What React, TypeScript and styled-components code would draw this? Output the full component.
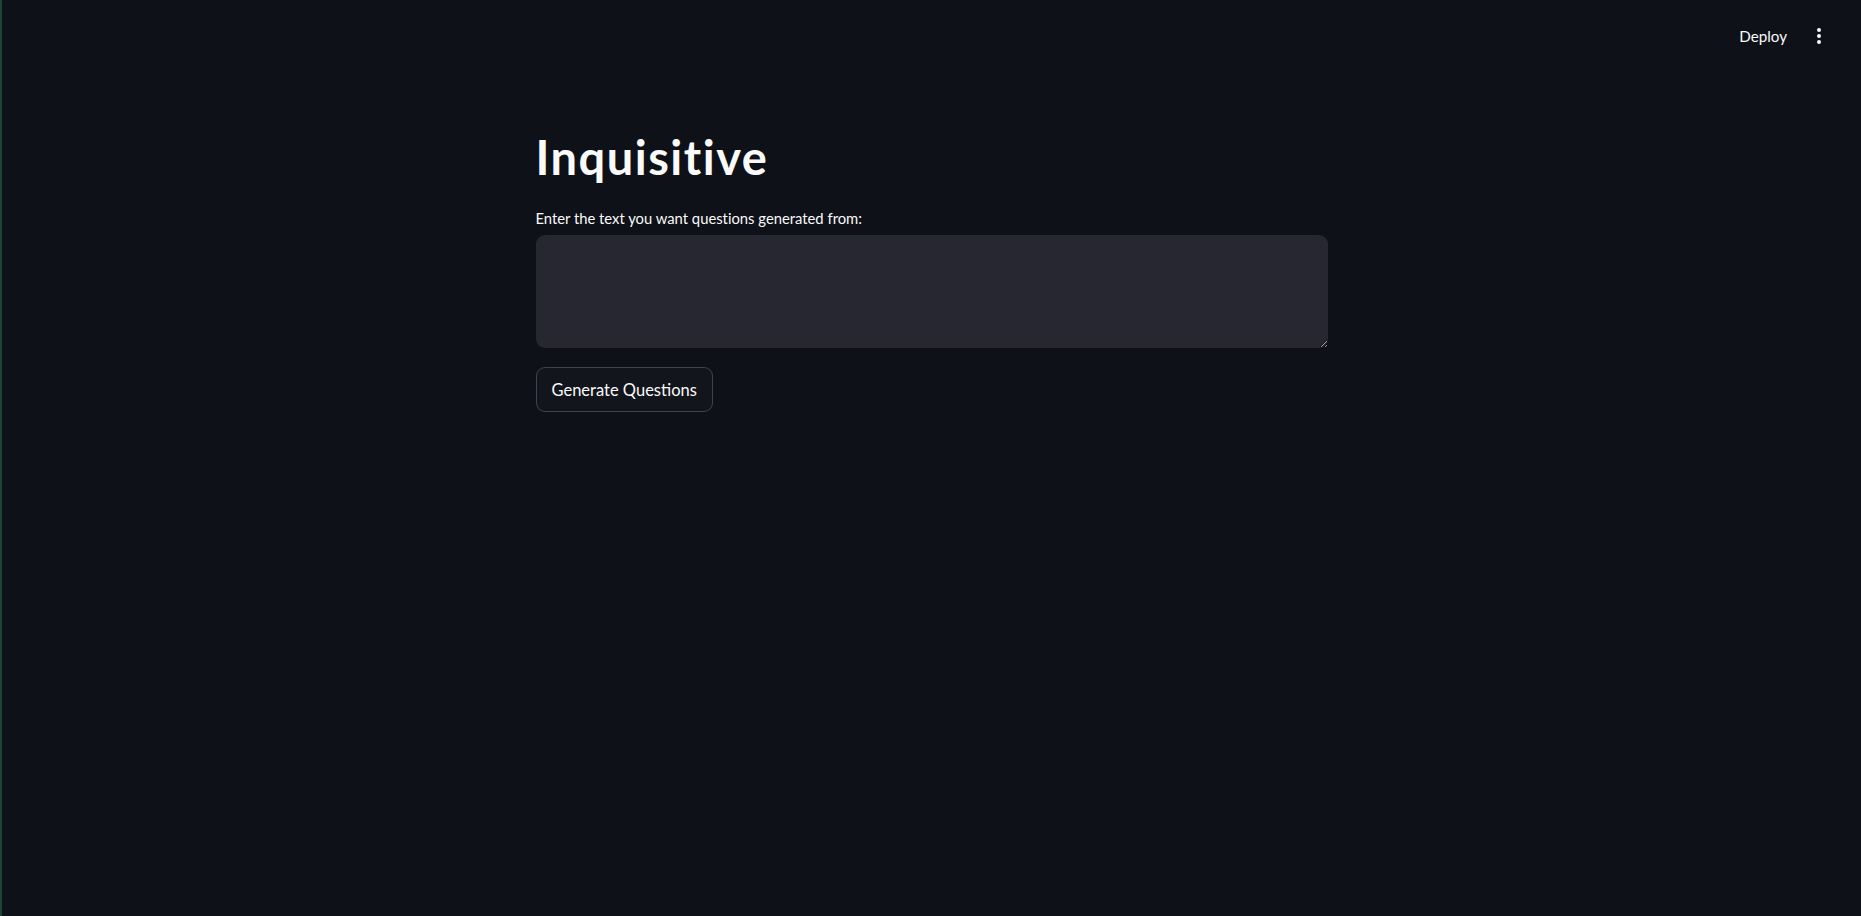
import styled, { createGlobalStyle } from "styled-components";

const GlobalStyle = createGlobalStyle`
    html, body {
        margin: 0;
        padding: 0;
        background: #0e1117;
    }
    body {
        font-family: "Source Sans Pro", Lato, "Noto Sans", sans-serif;
        font-variant-ligatures: none;
        color: #fafafa;
    }
`;

const Page = styled.div`
    min-height: 100vh;
    background: #0e1117;
    border-left: 2px solid #1c4436;
    box-sizing: border-box;
    display: flex;
    flex-direction: column;
`;

const Header = styled.header`
    display: flex;
    align-items: center;
    justify-content: flex-end;
    gap: 29px;
    height: 72px;
    padding-right: 39px;
    box-sizing: border-box;
`;

const DeployButton = styled.button`
    background: transparent;
    border: none;
    color: #fafafa;
    font-family: inherit;
    font-size: 15.2px;
    padding: 0;
    cursor: pointer;
`;

const MenuButton = styled.button`
    background: transparent;
    border: none;
    padding: 0;
    display: flex;
    align-items: center;
    cursor: pointer;
`;

const Main = styled.main`
    width: 792px;
    margin: 0 auto;
    padding-top: 57px;
    display: flex;
    flex-direction: column;
`;

const Title = styled.h1`
    margin: 0;
    font-size: 47px;
    line-height: 56px;
    font-weight: 700;
    letter-spacing: 1.5px;
    color: #fafafa;
`;

const Label = styled.label`
    display: block;
    margin-top: 23px;
    font-size: 14.8px;
    line-height: 20px;
    color: #fafafa;
`;

const TextArea = styled.textarea`
    display: block;
    margin-top: 7px;
    width: 100%;
    height: 113px;
    box-sizing: border-box;
    background: #262730;
    color: #fafafa;
    border: none;
    border-radius: 9px;
    padding: 12px 14px;
    font-family: inherit;
    font-size: 16px;
    resize: vertical;
    color-scheme: dark;
    outline: none;
`;

const Button = styled.button`
    align-self: flex-start;
    margin-top: 19px;
    height: 45px;
    padding: 0 15px;
    background: #12151c;
    color: #fafafa;
    border: 1px solid rgba(250, 250, 250, 0.2);
    border-radius: 9px;
    font-family: inherit;
    font-size: 16.5px;
    cursor: pointer;
`;

const DotsIcon = () => (
    <svg width="6" height="18" viewBox="0 0 6 18">
        <circle cx="3" cy="3" r="2" fill="#fafafa" />
        <circle cx="3" cy="9" r="2" fill="#fafafa" />
        <circle cx="3" cy="15" r="2" fill="#fafafa" />
    </svg>
);

const App = () => {
    return (
        <>
            <GlobalStyle />
            <Page>
                <Header>
                    <DeployButton>Deploy</DeployButton>
                    <MenuButton aria-label="Main menu">
                        <DotsIcon />
                    </MenuButton>
                </Header>
                <Main>
                    <Title>Inquisitive</Title>
                    <Label htmlFor="source-text">Enter the text you want questions generated from:</Label>
                    <TextArea id="source-text" />
                    <Button>Generate Questions</Button>
                </Main>
            </Page>
        </>
    );
};

export default App;
